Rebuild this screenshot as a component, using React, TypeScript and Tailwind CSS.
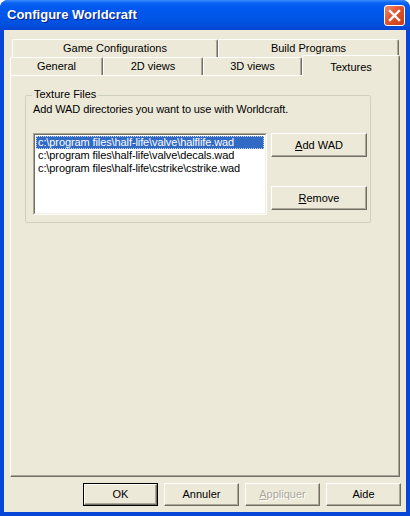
import React from "react";

const font = { fontFamily: '"Liberation Sans", Arial, sans-serif' };

function Btn({
  children,
  w = "w-[75px]",
  h = "h-[23px]",
  def = false,
  disabled = false,
}: {
  children: React.ReactNode;
  w?: string;
  h?: string;
  def?: boolean;
  disabled?: boolean;
}) {
  const inner = (
    <div
      className={`flex items-center justify-center bg-[#ECE9D8] border border-t-white border-l-white border-r-[#716F64] border-b-[#716F64] shadow-[inset_-1px_-1px_0_#ACA899] text-[11px] leading-none ${
        disabled ? "text-[#ACA899] [text-shadow:1px_1px_0_#fff]" : "text-black"
      } ${def ? "w-full h-full" : `${w} ${h}`}`}
    >
      {children}
    </div>
  );
  if (def) {
    return <div className={`${w} ${h} border border-black flex`}>{inner}</div>;
  }
  return inner;
}

function Tab({
  label,
  w,
  selected = false,
}: {
  label: string;
  w: string;
  selected?: boolean;
}) {
  if (selected) {
    return (
      <div
        className={`${w} h-[21px] -mt-[2px] relative z-10 flex items-start justify-center pt-[3px] bg-[#ECE9D8] border-t border-l border-r border-t-white border-l-white border-r-[#716F64] shadow-[inset_-1px_0_0_#ACA899] rounded-t-[2px] text-[11px] text-black`}
      >
        {label}
      </div>
    );
  }
  return (
    <div
      className={`${w} h-[18px] flex items-center justify-center bg-[#ECE9D8] border-t border-l border-r border-t-white border-l-white border-r-[#716F64] shadow-[inset_-1px_0_0_#ACA899] rounded-t-[2px] text-[11px] text-black`}
    >
      {label}
    </div>
  );
}

export default function App() {
  return (
    <div
      className="w-[410px] h-[516px] flex flex-col bg-[#0846D8] rounded-t-[8px] overflow-hidden"
      style={font}
    >
      {/* Title bar */}
      <div className="h-[30px] shrink-0 flex items-center justify-between pl-[7px] pr-[5px] bg-[linear-gradient(to_bottom,#3A8CFF_0px,#0A62F2_3px,#0058EE_8px,#0056E8_16px,#0050DE_24px,#0845D2_30px)]">
        <span className="text-white font-bold text-[13px] [text-shadow:1px_1px_0_#0A1E8C]">
          Configure Worldcraft
        </span>
        <div className="w-[21px] h-[21px] rounded-[3px] border border-white bg-[linear-gradient(135deg,#F08D6E_0%,#E0532D_45%,#C83D18_100%)] flex items-center justify-center">
          <svg width="13" height="13" viewBox="0 0 13 13">
            <path d="M2 2 L11 11 M11 2 L2 11" stroke="white" strokeWidth="2.4" strokeLinecap="square" />
          </svg>
        </div>
      </div>

      {/* Client */}
      <div className="flex-1 mx-[4px] mb-[4px] bg-[#ECE9D8] flex flex-col pt-[9px] pb-[5px]">
        <div className="ml-[6px] mr-[6px] flex flex-col">
          {/* Row 1 */}
          <div className="flex pl-[2px]">
            <Tab label="Game Configurations" w="w-[206px]" />
            <Tab label="Build Programs" w="w-[181px]" />
          </div>
          {/* Row 2 */}
          <div className="flex h-[18px] items-start">
            <Tab label="General" w="w-[93px]" />
            <Tab label="2D views" w="w-[100px]" />
            <Tab label="3D views" w="w-[99px]" />
            <Tab label="Textures" w="w-[98px]" selected />
          </div>
        </div>

        {/* Pane */}
        <div className="ml-[6px] mr-[6px] h-[402px] border border-t-white border-l-white border-r-[#716F64] border-b-[#716F64] shadow-[inset_-1px_-1px_0_#ACA899] pl-[14px] pt-[19px]">
          <div className="relative w-[346px] h-[128px] border border-[#D0D0BF] rounded-[2px] flex flex-col pl-[7px] pt-[7px]">
            <div className="absolute left-[6px] -top-[8px] px-[2px] bg-[#ECE9D8] text-[11px] leading-[13px] text-black">
              Texture Files
            </div>
            <div className="text-[11px] leading-[13px] text-black tracking-[-0.1px]">
              Add WAD directories you want to use with Worldcraft.
            </div>
            <div className="flex mt-[17px] gap-[4px]">
              <div className="w-[234px] h-[82px] bg-white border border-t-[#ACA899] border-l-[#ACA899] border-r-white border-b-white">
                <div className="w-full h-full border border-t-[#716F64] border-l-[#716F64] border-r-[#F1EFE2] border-b-[#F1EFE2] p-[1px] flex flex-col text-[11px] leading-[13px] text-black tracking-[-0.1px]">
                  <div className="bg-[#316AC5] text-white pl-[2px] outline-dotted outline-1 -outline-offset-1 outline-[#CCD7EE]">
                    c:\program files\half-life\valve\halflife.wad
                  </div>
                  <div className="pl-[2px]">c:\program files\half-life\valve\decals.wad</div>
                  <div className="pl-[2px]">c:\program files\half-life\cstrike\cstrike.wad</div>
                </div>
              </div>
              <div className="flex flex-col">
                <Btn w="w-[96px]" h="h-[24px]">
                  <span>
                    <span className="underline">A</span>dd WAD
                  </span>
                </Btn>
                <div className="h-[29px]" />
                <Btn w="w-[96px]" h="h-[24px]">
                  <span>
                    <span className="underline">R</span>emove
                  </span>
                </Btn>
              </div>
            </div>
          </div>
        </div>

        {/* Bottom buttons */}
        <div className="mt-[6px] flex justify-end gap-[6px] mr-[5px]">
          <Btn def>OK</Btn>
          <Btn>Annuler</Btn>
          <Btn disabled>
            <span>
              <span className="underline">A</span>ppliquer
            </span>
          </Btn>
          <Btn>Aide</Btn>
        </div>
      </div>
    </div>
  );
}
